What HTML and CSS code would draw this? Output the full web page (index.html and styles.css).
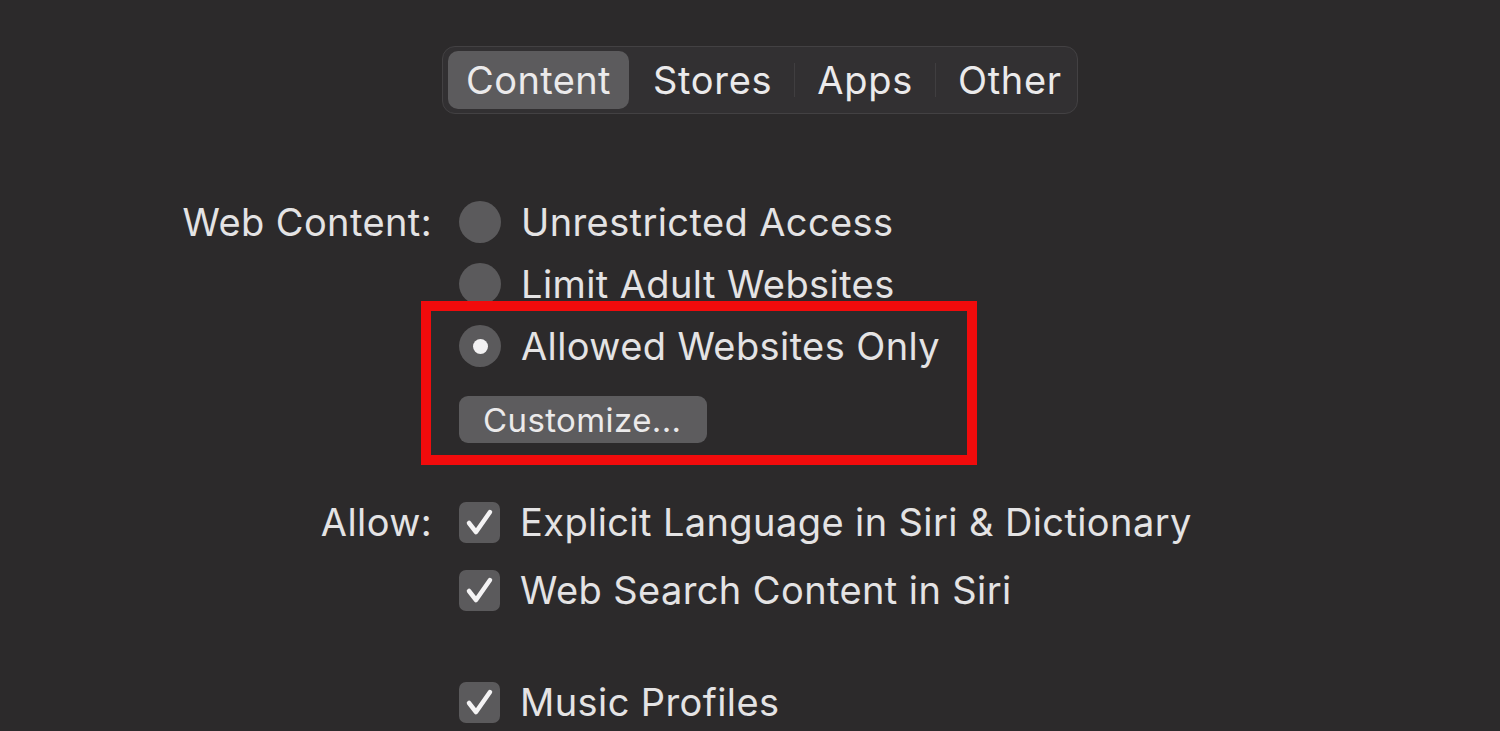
FILE: index.html
```html
<!DOCTYPE html>
<html lang="en">
<head>
    <meta charset="UTF-8">
    <title>Content &amp; Privacy</title>
    <link rel="stylesheet" href="styles.css">
</head>
<body>
    <div class="tabs">
        <div class="tab active">Content</div>
        <div class="tab first">Stores</div>
        <div class="sep"></div>
        <div class="tab">Apps</div>
        <div class="sep"></div>
        <div class="tab">Other</div>
    </div>

    <div class="group web">
        <div class="label">Web Content:</div>
        <div class="opts">
            <div class="row"><span class="radio"></span>Unrestricted Access</div>
            <div class="row"><span class="radio"></span>Limit Adult Websites</div>
            <div class="row"><span class="radio on"></span>Allowed Websites Only</div>
            <button class="btn">Customize...</button>
        </div>
        <!-- red highlight -->
        <div class="mark"></div>
    </div>

    <div class="group allow">
        <div class="label">Allow:</div>
        <div class="opts">
            <div class="row tall"><span class="check"><svg viewBox="0 0 41 41"><path d="M10 21 L17 30 L31 10"/></svg></span>Explicit Language in Siri &amp; Dictionary</div>
            <div class="row tall"><span class="check"><svg viewBox="0 0 41 41"><path d="M10 21 L17 30 L31 10"/></svg></span>Web Search Content in Siri</div>
            <div class="row tall music"><span class="check"><svg viewBox="0 0 41 41"><path d="M10 21 L17 30 L31 10"/></svg></span>Music Profiles</div>
        </div>
    </div>
</body>
</html>
```

FILE: styles.css
```css
*{
    margin: 0;
    padding: 0;
    box-sizing: border-box;
}
body{
    height: 731px;
    overflow: hidden;
    background: #2c2a2b;
    color: #e4e3e4;
    font-family: Inter, "Liberation Sans", sans-serif;
    font-size: 38px;
    letter-spacing: 0.4px;
    padding-top: 46px;
}
/* 顶部分段控件 */
.tabs{
    display: flex;
    align-items: center;
    width: 636px;
    height: 68px;
    margin-left: 442px;
    padding: 0 5px;
    background: #323032;
    border: 1px solid #434143;
    border-radius: 13px;
    overflow: hidden;
}
.tab{
    flex-shrink: 0;
    padding: 0 22px;
    height: 58px;
    line-height: 58px;
    color: #ebeaeb;
    letter-spacing: 0.7px;
}
.tab.first{
    padding-left: 24px;
}
.tab.active{
    width: 181px;
    text-align: center;
    padding: 0;
    background: #5c5b5d;
    border-radius: 10px;
    letter-spacing: 0.4px;
}
.sep{
    flex-shrink: 0;
    width: 1px;
    height: 34px;
    background: #403e40;
}
.group{
    display: grid;
    grid-template-columns: 432px 1fr;
    column-gap: 27px;
    position: relative;
}
.web{
    margin-top: 77px;
}
.label{
    text-align: right;
    line-height: 62px;
}
.row{
    display: flex;
    align-items: center;
    height: 62px;
    gap: 20px;
}
.radio{
    width: 42px;
    height: 42px;
    border-radius: 50%;
    background: #5b5a5c;
    display: flex;
    align-items: center;
    justify-content: center;
}
.radio.on::after{
    content: "";
    width: 15px;
    height: 15px;
    border-radius: 50%;
    background: #f2f1f2;
}
.btn{
    margin-top: 19px;
    width: 248px;
    height: 47px;
    border: none;
    border-radius: 9px;
    background: #5d5c5e;
    color: #ebeaeb;
    font-family: inherit;
    font-size: 33px;
    letter-spacing: 0.4px;
    text-align: left;
    padding-left: 24px;
}
.mark{
    position: absolute;
    left: 421px;
    top: 110px;
    width: 556px;
    height: 164px;
    border: 10px solid #f10b0c;
}
.allow{
    margin-top: 45px;
}
.allow .label{
    line-height: 68px;
}
.row.tall{
    height: 68px;
}
.row.music{
    margin-top: 44px;
}
.check{
    width: 41px;
    height: 41px;
    border-radius: 7px;
    background: #5b5a5c;
}
.check svg{
    display: block;
    width: 41px;
    height: 41px;
    fill: none;
    stroke: #f4f3f4;
    stroke-width: 4.5;
    stroke-linecap: round;
    stroke-linejoin: round;
}
```
